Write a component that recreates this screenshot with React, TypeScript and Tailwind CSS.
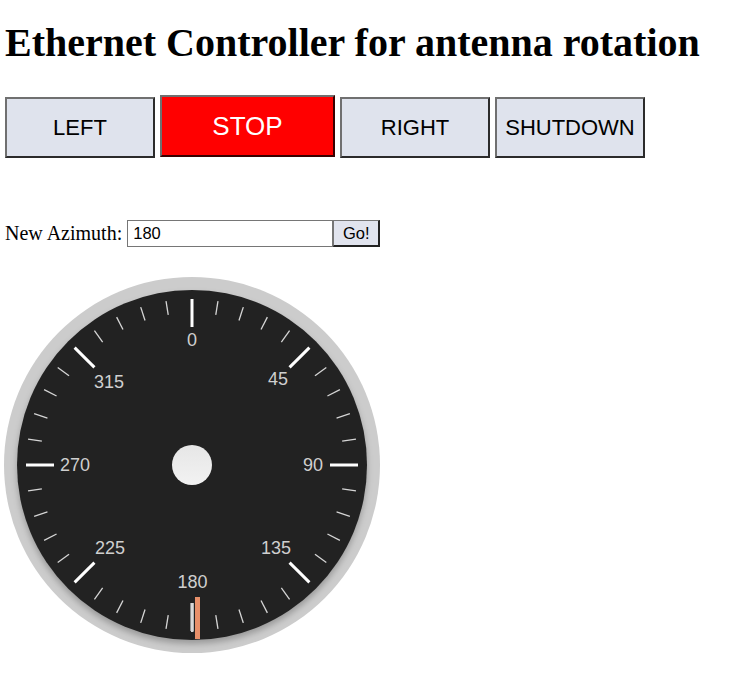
import React from 'react';

const CX = 192;
const CY = 193;

function polar(r: number, deg: number) {
  const a = (deg * Math.PI) / 180;
  return { x: CX + r * Math.sin(a), y: CY - r * Math.cos(a) };
}

const labels = [
  { t: '0', x: 192, y: 67 },
  { t: '45', x: 278, y: 106 },
  { t: '90', x: 313, y: 192 },
  { t: '135', x: 276, y: 275 },
  { t: '180', x: 192.5, y: 309 },
  { t: '225', x: 110, y: 275 },
  { t: '270', x: 75, y: 192 },
  { t: '315', x: 109, y: 109 },
];

function Gauge() {
  const ticks = [];
  for (let i = 0; i < 40; i++) {
    const deg = i * 9;
    const major = deg % 45 === 0;
    const p1 = polar(major ? 138 : 152, deg);
    const p2 = polar(166, deg);
    ticks.push(
      <line
        key={i}
        x1={p1.x}
        y1={p1.y}
        x2={p2.x}
        y2={p2.y}
        stroke={major ? '#ffffff' : '#d6d6d6'}
        strokeWidth={major ? 3 : 1.3}
      />
    );
  }

  return (
    <svg width="390" height="390" viewBox="0 0 390 390" className="block">
      <defs>
        <filter id="plateShadow" x="-20%" y="-20%" width="140%" height="140%">
          <feGaussianBlur stdDeviation="3" />
        </filter>
        <linearGradient id="hub" x1="0" y1="0" x2="0" y2="1">
          <stop offset="0" stopColor="#e6e6e6" />
          <stop offset="1" stopColor="#f2f2f2" />
        </linearGradient>
      </defs>
      <circle cx={CX} cy={CY} r="188" fill="#cccccc" />
      <circle cx={CX} cy={CY + 4} r="175" fill="rgba(0,0,0,0.25)" filter="url(#plateShadow)" />
      <circle cx={CX} cy={CY} r="175" fill="#222222" />
      {ticks}
      {labels.map((l) => (
        <text
          key={l.t}
          x={l.x}
          y={l.y + 6.5}
          textAnchor="middle"
          fontFamily="'Liberation Sans', Arial, sans-serif"
          fontSize="18"
          fill="#cfcfcf"
        >
          {l.t}
        </text>
      ))}
      {/* needle */}
      <rect x="191" y="331" width="2.5" height="29" fill="#d8d8d8" />
      <rect x="195" y="325" width="5" height="42" fill="#e8906a" />
      <circle cx={CX} cy={CY} r="20" fill="url(#hub)" />
    </svg>
  );
}

export default function App() {
  const btn =
    "h-[61px] w-[150px] mt-[2px] border-2 border-t-[#707070] border-l-[#707070] border-r-[#2b2b2b] border-b-[#2b2b2b] bg-[#dfe3ed] text-[22px] text-black font-['Liberation_Sans',Arial,sans-serif]";

  return (
    <div className="min-h-screen bg-white font-['Liberation_Serif','Times_New_Roman',serif] text-black">
      <h1 className="pt-[21px] pl-[5px] text-[40px] leading-[44px] font-bold">
        Ethernet Controller for antenna rotation
      </h1>

      <div className="mt-[30px] ml-[5px] flex items-start gap-[5px]">
        <button className={btn}>LEFT</button>
        <button className="h-[62px] w-[175px] border-2 border-t-[#707070] border-l-[#707070] border-r-[#3a0000] border-b-[#3a0000] bg-[#ff0000] text-[26px] text-white font-['Liberation_Sans',Arial,sans-serif]">
          STOP
        </button>
        <button className={btn}>RIGHT</button>
        <button className={btn}>SHUTDOWN</button>
      </div>

      <div className="mt-[62px] ml-[5px] flex h-[27px] items-center">
        <span className="text-[20px] leading-[23px]">New Azimuth:</span>
        <input
          defaultValue="180"
          className="ml-[5px] h-[27px] w-[206px] border border-[#767676] bg-white px-[5px] text-[16.5px] font-['Liberation_Sans',Arial,sans-serif] outline-none"
        />
        <button className="h-[27px] w-[47px] border border-t-[#767676] border-l-[#767676] border-r-2 border-b-2 border-r-[#222] border-b-[#222] bg-[#e1e4ee] text-[16.5px] font-['Liberation_Sans',Arial,sans-serif]">
          Go!
        </button>
      </div>

      <div className="mt-[25px]">
        <Gauge />
      </div>
    </div>
  );
}
